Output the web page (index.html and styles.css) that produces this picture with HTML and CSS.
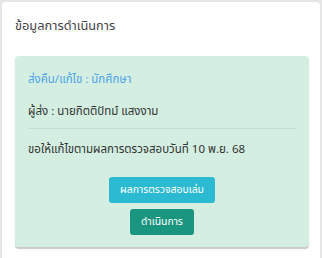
FILE: index.html
```html
<!DOCTYPE html>
<html lang="th">
<head>
<meta charset="utf-8">
<link rel="stylesheet" href="styles.css">
</head>
<body>
<div class="card">
  <div class="card-title">ข้อมูลการดำเนินการ</div>
  <div class="alert">
    <div class="alert-title">ส่งคืน/แก้ไข : นักศึกษา</div>
    <div class="sender">ผู้ส่ง : นายกิตติปัทม์ แสงงาม</div>
    <hr class="divider">
    <div class="note">ขอให้แก้ไขตามผลการตรวจสอบวันที่ 10 พ.ย. 68</div>
    <div class="actions">
      <button class="btn btn-info">ผลการตรวจสอบเล่ม</button>
      <button class="btn btn-teal">ดำเนินการ</button>
    </div>
  </div>
</div>
</body>
</html>
```
FILE: styles.css
```css
html, body {
  margin: 0;
  padding: 0;
}
body {
  background: #e6e6e6;
  font-family: "Noto Sans", "Noto Sans Thai", sans-serif;
  color: #333;
  padding: 2px 2px 0 2px;
  height: 258px;
  box-sizing: border-box;
  overflow: hidden;
}
.card {
  background: #fff;
  border-radius: 4px 4px 0 0;
  padding: 14px 11px 0 13px;
  height: 256px;
  box-sizing: border-box;
}
.card-title {
  font-size: 12.8px;
  line-height: 18px;
  color: #444;
}
.alert {
  margin-top: 22px;
  background: #d4efe2;
  border-radius: 4px;
  box-shadow: 0 2px 1px rgba(160, 150, 150, 0.5);
  padding: 14px 13px 12px 13px;
}
.alert-title {
  font-size: 11.5px;
  line-height: 18px;
  color: #4fa3e8;
}
.sender {
  margin-top: 14px;
  font-size: 11.5px;
  line-height: 18px;
  color: #333;
}
.divider {
  border: 0;
  border-top: 1px solid #c5ddd1;
  margin: 8px 0 11px 0;
}
.note {
  font-size: 11.5px;
  line-height: 18px;
  color: #333;
}
.actions {
  margin-top: 19px;
  display: flex;
  flex-direction: column;
  align-items: center;
  gap: 6px;
}
.btn {
  font-family: inherit;
  font-size: 10.4px;
  color: #fff;
  border: 0;
  border-radius: 3px;
  height: 26px;
  padding: 0 11px;
}
.btn-info {
  background: #2bbad2;
}
.btn-teal {
  background: #1a9580;
}
```
